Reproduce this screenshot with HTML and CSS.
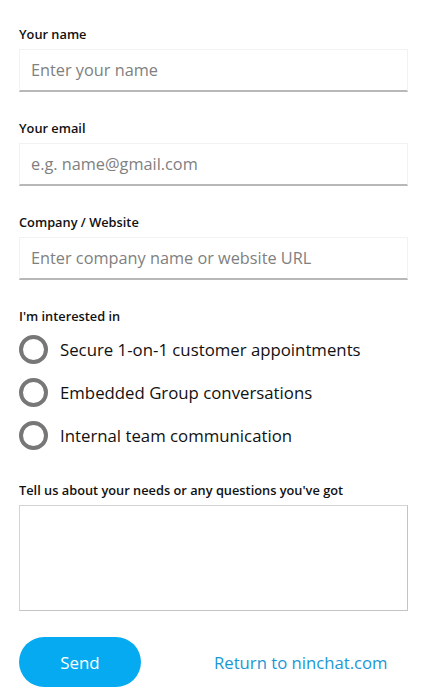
FILE: index.html
```html
<!DOCTYPE html>
<html lang="en">
<head>
<meta charset="utf-8">
<title>Contact</title>
<link rel="stylesheet" href="styles.css">
</head>
<body>
<form class="form">
  <div class="field">
    <label class="label">Your name</label>
    <input class="input" type="text" placeholder="Enter your name">
  </div>
  <div class="field">
    <label class="label">Your email</label>
    <input class="input" type="text" placeholder="e.g. name@gmail.com">
  </div>
  <div class="field">
    <label class="label">Company / Website</label>
    <input class="input" type="text" placeholder="Enter company name or website URL">
  </div>
  <div class="field field-radios">
    <span class="label">I'm interested in</span>
    <div class="radios">
      <label class="radio"><span class="circle"></span><span>Secure 1-on-1 customer appointments</span></label>
      <label class="radio"><span class="circle"></span><span>Embedded Group conversations</span></label>
      <label class="radio"><span class="circle"></span><span>Internal team communication</span></label>
    </div>
  </div>
  <div class="field field-text">
    <label class="label">Tell us about your needs or any questions you've got</label>
    <textarea class="textarea"></textarea>
  </div>
  <div class="actions">
    <button type="button" class="send">Send</button>
    <a class="return" href="#">Return to ninchat.com</a>
  </div>
</form>
</body>
</html>
```
FILE: styles.css
```css
html, body {
  margin: 0;
  padding: 0;
  background: #ffffff;
}
body {
  font-family: "Open Sans", "Noto Sans", sans-serif;
  color: #111;
}
.form {
  width: 389px;
  padding: 26px 0 0 19px;
  display: flex;
  flex-direction: column;
}
.field {
  display: flex;
  flex-direction: column;
  margin-bottom: 28px;
}
.label {
  font-size: 12.8px;
  font-weight: 600;
  line-height: 16px;
  color: #111;
  margin-bottom: 7px;
}
.input {
  box-sizing: border-box;
  height: 43px;
  width: 389px;
  margin: 0;
  border: 1px solid #f2f2f2;
  border-bottom: 2px solid #b8b8b8;
  background-color: #ffffff;
  padding: 0 11px;
  font-family: inherit;
  font-size: 16.3px;
  color: #333;
  outline: none;
  -webkit-appearance: none;
  appearance: none;
}
.input::placeholder {
  color: #808080;
}
.field-radios {
  margin-bottom: 32px;
}
.field-radios .label {
  margin-bottom: 11px;
}
.radios {
  display: flex;
  flex-direction: column;
  gap: 14px;
}
.radio {
  display: flex;
  align-items: center;
  gap: 12px;
  font-size: 16.8px;
  color: #111;
  line-height: 28px;
}
.circle {
  box-sizing: border-box;
  width: 29px;
  height: 29px;
  border: 4px solid #777;
  border-radius: 50%;
  background: #fff;
  flex: none;
}
.field-text .label {
  margin-bottom: 7px;
}
.textarea {
  box-sizing: border-box;
  width: 389px;
  height: 106px;
  margin: 0;
  border: 1px solid #c4c4c4;
  border-top-color: #d4d4d4;
  border-left-color: #d4d4d4;
  background: #fff;
  resize: none;
  outline: none;
}
.field-text {
  margin-bottom: 26px;
}
.actions {
  display: flex;
  align-items: center;
}
.send {
  width: 122px;
  height: 50px;
  border: none;
  border-radius: 25px;
  background: #06aaf0;
  color: #fff;
  font-family: inherit;
  font-size: 16.9px;
  cursor: pointer;
}
.return {
  margin-left: 73px;
  color: #1a98d5;
  text-decoration: none;
  font-size: 16.7px;
}
```
